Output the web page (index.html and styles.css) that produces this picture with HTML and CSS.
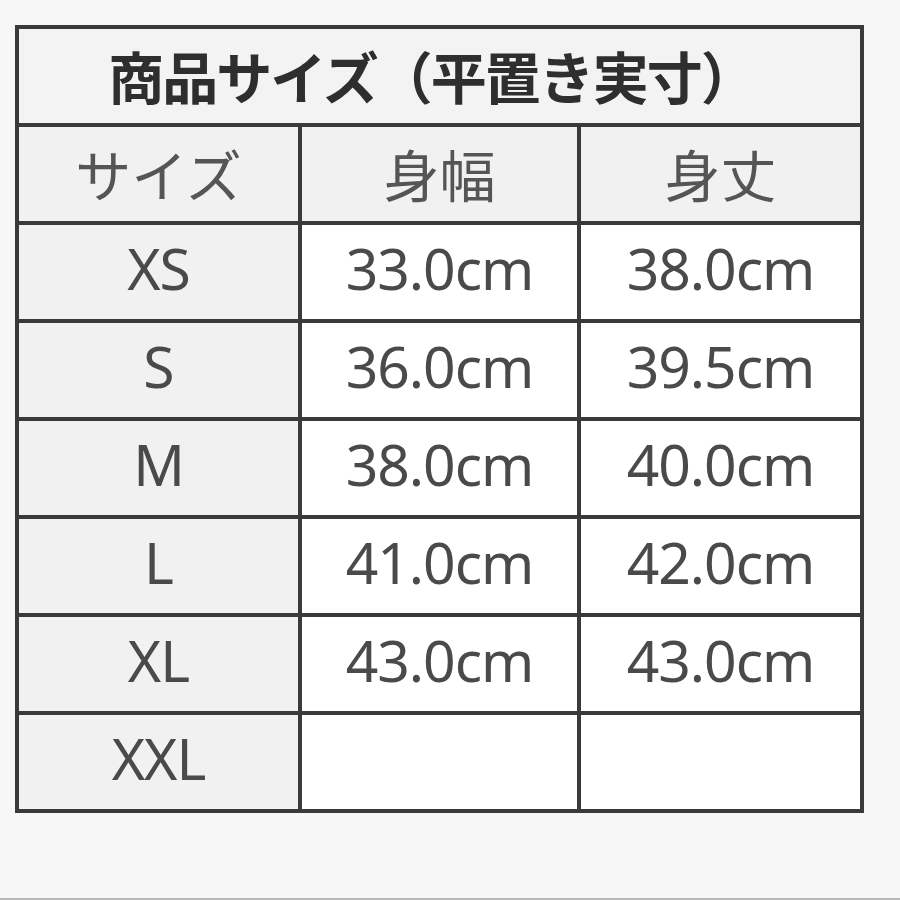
FILE: index.html
```html
<!DOCTYPE html>
<html lang="ja">
<head>
<meta charset="utf-8">
<link rel="stylesheet" href="styles.css">
</head>
<body>
<div class="page">
  <div class="grid">
    <div class="cell title">商品サイズ（平置き実寸）</div>
    <div class="cell head side">サイズ</div>
    <div class="cell head">身幅</div>
    <div class="cell head">身丈</div>

    <div class="cell side num">XS</div>
    <div class="cell num">33.0cm</div>
    <div class="cell num">38.0cm</div>

    <div class="cell side num">S</div>
    <div class="cell num">36.0cm</div>
    <div class="cell num">39.5cm</div>

    <div class="cell side num">M</div>
    <div class="cell num">38.0cm</div>
    <div class="cell num">40.0cm</div>

    <div class="cell side num">L</div>
    <div class="cell num">41.0cm</div>
    <div class="cell num">42.0cm</div>

    <div class="cell side num">XL</div>
    <div class="cell num">43.0cm</div>
    <div class="cell num">43.0cm</div>

    <div class="cell side num">XXL</div>
    <div class="cell num"></div>
    <div class="cell num"></div>
  </div>
</div>
</body>
</html>
```

FILE: styles.css
```css
html, body {
  margin: 0;
  padding: 0;
}
body {
  background: #f7f7f7;
  width: 900px;
  height: 900px;
  overflow: hidden;
}
.page {
  box-sizing: border-box;
  height: 900px;
  padding: 25px 0 0 15px;
  border-bottom: 2px solid #b8b8b8;
}
.grid {
  display: grid;
  grid-template-columns: 279px 275px 279px;
  grid-template-rows: repeat(8, 94px);
  gap: 4px;
  padding: 4px;
  width: max-content;
  background: #3a3a3a;
}
.cell {
  background: #ffffff;
  display: flex;
  align-items: center;
  justify-content: center;
  font-family: "Noto Sans CJK JP", "Noto Sans", sans-serif;
  color: #4a4a4a;
}
.title {
  grid-column: 1 / span 3;
  background: #f3f3f3;
  font-size: 56px;
  font-weight: 700;
  letter-spacing: -2px;
  color: #2e2e2e;
  padding: 0 16px 4px 0;
}
.head {
  background: #f1f1f1;
  font-size: 56px;
  font-weight: 400;
  color: #555;
  padding-bottom: 4px;
}
.side {
  background: #f1f1f1;
}
.num {
  font-family: "Noto Sans", "Open Sans", sans-serif;
  font-size: 57px;
  color: #4a4a4a;
  letter-spacing: -1px;
  padding-bottom: 8px;
}
.head.side {
  font-family: "Noto Sans CJK JP", sans-serif;
}
```
